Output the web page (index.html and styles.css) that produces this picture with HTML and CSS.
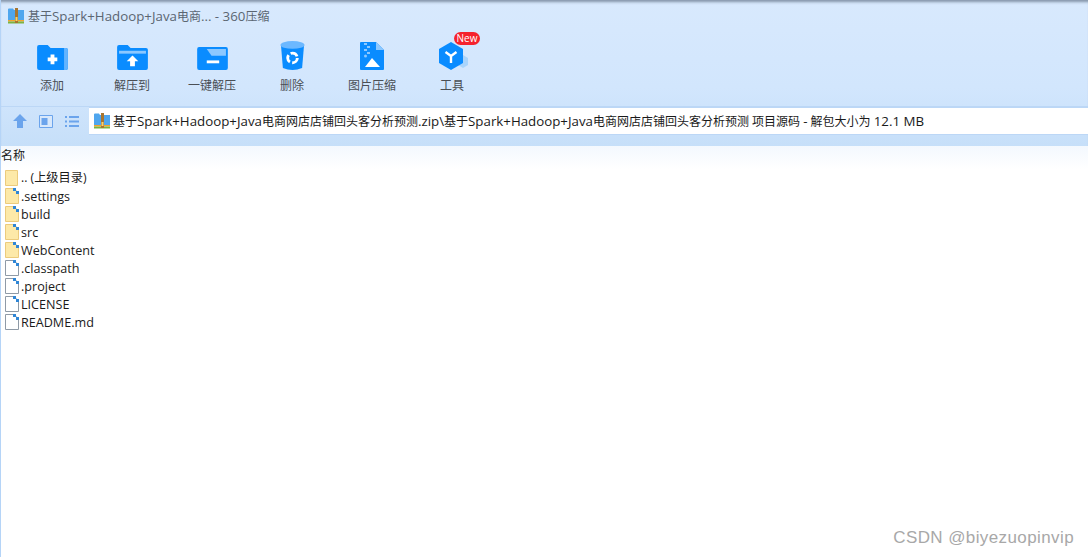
FILE: index.html

```html
<!DOCTYPE html>
<html lang="zh-CN">
<head>
    <meta charset="UTF-8" />
    <title>360压缩</title>
    <link rel="stylesheet" href="styles.css">
</head>
<body>
    <svg class="defs" width="0" height="0">
        <symbol id="zip" viewBox="0 0 16 16">
            <path d="M0 3V1.500Q0 .5 1 .5H5L6 2H16V12H0Z" fill="#4fa6ee"/>
            <path d="M0 12H16V13.500H0Z" fill="#f2a52c"/>
            <path d="M0 13.500H16V15.500H0Z" fill="#7cb342"/>
            <path d="M7 0H10V15H7Z" fill="#a8752f"/>
            <path d="M7.500 9H9.500V13H7.500Z" fill="#f7d26a"/>
        </symbol>
        <symbol id="folder" viewBox="0 0 14 16">
            <path d="M.5 .5H12.500V15.500H.5Z" fill="#fde9a8" stroke="#eccb7c"/>
        </symbol>
        <symbol id="sfolder" viewBox="0 0 14 16">
            <path d="M.5 .5H9L13.500 5V15.500H.5Z" fill="#fde9a8" stroke="#eccb7c"/>
            <rect x="8" y="0" width="3" height="3" fill="#2f86d6"/>
            <rect x="11" y="3" width="3" height="3" fill="#2f86d6"/>
        </symbol>
        <symbol id="file" viewBox="0 0 14 16">
            <path d="M.5 .5H9L13.500 5V15.500H.5Z" fill="#fff" stroke="#8f9aa6"/>
            <rect x="8" y="0" width="3" height="3" fill="#2f86d6"/>
            <rect x="11" y="3" width="3" height="3" fill="#2f86d6"/>
        </symbol>
    </svg>

    <header class="chrome">
        <div class="titlebar">
            <svg class="title-icon"><use href="#zip"/></svg>
            <span>基于<span class="lat">Spark+Hadoop+Java</span>电商<span class="lat">...&nbsp;- 360</span>压缩</span>
        </div>

        <nav class="toolbar">
            <div class="tool">
                <div class="tool-icon">
                    <svg class="ico-folder" viewBox="0 0 32 26">
                        <path d="M0 2Q0 0 2 0H11L14 3H30Q32 3 32 5V24Q32 26 30 26H2Q0 26 0 24Z" fill="#0a8cff"/>
                        <path d="M28 3H30Q32 3 32 5V24Q32 26 30 26H28Z" fill="#63b4ff"/>
                        <path d="M14 10H18V13H21V17H18V20H14V17H11V13H14Z" fill="#fff"/>
                    </svg>
                </div>
                <span>添加</span>
            </div>
            <div class="tool">
                <div class="tool-icon">
                    <svg class="ico-folder" viewBox="0 0 32 26">
                        <path d="M0 2Q0 0 2 0H11L14 3H30Q32 3 32 5V24Q32 26 30 26H2Q0 26 0 24Z" fill="#0a8cff"/>
                        <path d="M2 6H30V9H2Z" fill="#8cc8ff"/>
                        <path d="M16 11L22 17H18.500V22H13.500V17H10Z" fill="#fff"/>
                    </svg>
                </div>
                <span>解压到</span>
            </div>
            <div class="tool">
                <div class="tool-icon">
                    <svg class="ico-open" viewBox="0 0 32 24">
                        <path d="M0 2Q0 0 2 0H30Q32 0 32 2V22Q32 24 30 24H2Q0 24 0 22Z" fill="#0a8cff"/>
                        <path d="M10 2H30V9H15Z" fill="#8cc8ff"/>
                        <path d="M10 14H23V17H10Z" fill="#fff"/>
                    </svg>
                </div>
                <span>一键解压</span>
            </div>
            <div class="tool">
                <div class="tool-icon">
                    <svg class="ico-trash" viewBox="0 0 26 30">
                        <path d="M1 4L3 28Q8 30 13 30T23 28L25 4Z" fill="#0a8cff"/>
                        <ellipse cx="13" cy="4" rx="12.500" ry="4" fill="#6cb8ff"/>
                        <circle cx="13" cy="17.500" r="5" fill="none" stroke="#fff" stroke-width="3" stroke-dasharray="8 2.470"/>
                    </svg>
                </div>
                <span>删除</span>
            </div>
            <div class="tool">
                <div class="tool-icon">
                    <svg class="ico-doc" viewBox="0 0 24 28">
                        <path d="M1 0H16L24 8V27Q24 28 23 28H1Q0 28 0 27V1Q0 0 1 0Z" fill="#0a8cff"/>
                        <path d="M16 0L24 8H16Z" fill="#8cc8ff"/>
                        <path d="M4 1H7V3H4ZM7 4H10V6H7ZM4 7H7V9H4ZM7 10H10V12H7Z" fill="#8cc8ff"/>
                        <circle cx="5.500" cy="14" r="1.500" fill="#8cc8ff"/>
                        <path d="M5 25L12 16L20 25Z" fill="#fff"/>
                    </svg>
                </div>
                <span>图片压缩</span>
            </div>
            <div class="tool">
                <div class="tool-icon">
                    <svg class="ico-hex" viewBox="0 0 30 28">
                        <path d="M24 13L29 16V23L24 26L19 23V16Z" fill="#a9d4fb"/>
                        <path d="M12 0L24 7V21L12 28L0 21V7Z" fill="#0a8cff"/>
                        <path d="M12 14V21M12 14L6.500 10M12 14L17.500 10" stroke="#fff" stroke-width="2.400" fill="none"/>
                    </svg>
                </div>
                <span>工具</span>
                <b class="badge">New</b>
            </div>
        </nav>

        <div class="pathbar">
            <div class="nav-icons">
                <svg viewBox="0 0 14 14" width="14" height="14"><path d="M7 0L14 7H10V14H4V7H0Z" fill="#6ba4ec"/></svg>
                <svg viewBox="0 0 14 13" width="14" height="13">
                    <path d="M.5 .5H13.500V12.500H.5Z" fill="#d8e8fb" stroke="#6ba4ec"/>
                    <path d="M2.500 3H8.500V10H2.500Z" fill="#6ba4ec"/>
                </svg>
                <svg viewBox="0 0 14 11" width="14" height="11">
                    <path d="M0 0H2V2H0ZM4 0H14V2H4ZM0 4.500H2V6.500H0ZM4 4.500H14V6.500H4ZM0 9H2V11H0ZM4 9H14V11H4Z" fill="#6ba4ec"/>
                </svg>
            </div>
            <div class="path">
                <svg class="title-icon"><use href="#zip"/></svg>
                <span>基于<span class="lat">Spark+Hadoop+Java</span>电商网店店铺回头客分析预测<span class="lat">.zip\</span>基于<span class="lat">Spark+Hadoop+Java</span>电商网店店铺回头客分析预测 项目源码 <span class="lat">-</span> 解包大小为 <span class="lat">12.1 MB</span></span>
            </div>
        </div>
    </header>

    <main class="list">
        <div class="col-head">名称</div>
        <ul class="files">
            <li><svg><use href="#folder"/></svg><span class="parent">.. (上级目录)</span></li>
            <li><svg><use href="#sfolder"/></svg>.settings</li>
            <li><svg><use href="#sfolder"/></svg>build</li>
            <li><svg><use href="#sfolder"/></svg>src</li>
            <li><svg><use href="#sfolder"/></svg>WebContent</li>
            <li><svg><use href="#file"/></svg>.classpath</li>
            <li><svg><use href="#file"/></svg>.project</li>
            <li><svg><use href="#file"/></svg>LICENSE</li>
            <li><svg><use href="#file"/></svg>README.md</li>
        </ul>
    </main>

    <div class="watermark">CSDN @biyezuopinvip</div>
</body>
</html>
```

FILE: styles.css

```css
* {
    box-sizing: border-box;
}

html, body {
    margin: 0;
    height: 100%;
}

body {
    position: relative;
    overflow: hidden;
    display: flex;
    flex-direction: column;
    font-family: "Open Sans", "Noto Sans CJK SC", sans-serif;
    font-size: 12px;
    color: #1a1a1a;
    background: #fff;
    border-left: 1px solid #b5d4f7;
}

.defs {
    position: absolute;
}

.lat {
    font-size: 13.3px;
}

.chrome {
    height: 146px;
    background: linear-gradient(#d8e9fd, #d2e6fd 60%, #c6dff9);
    box-shadow: inset 0 4px 3px -2px #8494a8;
}

.titlebar {
    height: 32px;
    display: flex;
    align-items: center;
    gap: 4px;
    padding-left: 7px;
    color: #5b6672;
}

.title-icon {
    width: 16px;
    height: 16px;
}

.toolbar {
    height: 75px;
    display: flex;
    padding-left: 11px;
    border-bottom: 1px solid #bcd7f6;
}

.tool {
    position: relative;
    width: 80px;
    display: flex;
    flex-direction: column;
    align-items: center;
    color: #4a4f55;
}

.tool-icon {
    height: 30px;
    margin-top: 8px;
    margin-bottom: 6px;
    display: flex;
    align-items: flex-end;
}

.ico-folder {
    width: 31px;
    height: 25px;
}

.ico-open {
    width: 31px;
    height: 23px;
}

.ico-trash {
    width: 25px;
    height: 29px;
}

.ico-doc {
    width: 24px;
    height: 28px;
}

.ico-hex {
    width: 30px;
    height: 28px;
    margin-left: 3px;
}

.badge {
    position: absolute;
    top: 0;
    left: 42px;
    width: 26px;
    height: 13px;
    border-radius: 7px;
    background: #f5222d;
    color: #fff;
    font-size: 10px;
    font-weight: 400;
    line-height: 13px;
    text-align: center;
}

.pathbar {
    height: 28px;
    display: flex;
    align-items: center;
}

.nav-icons {
    width: 88px;
    display: flex;
    align-items: center;
    gap: 12px;
    padding-left: 12px;
}

.path {
    flex: 1;
    height: 28px;
    display: flex;
    align-items: center;
    gap: 3px;
    padding-left: 5px;
    background: #fff;
    border-top: 1px solid #bcd7f6;
    border-bottom: 1px solid #bcd7f6;
    white-space: nowrap;
}

.list {
    flex: 1;
}

.col-head {
    height: 23px;
    line-height: 20px;
    background: linear-gradient(#f3f8fe, #fff);
}

.files {
    list-style: none;
    margin: 0;
    padding: 0 0 0 4px;
    font-size: 12.6px;
}

.files li {
    height: 18px;
    display: flex;
    align-items: center;
    gap: 2px;
    white-space: nowrap;
}

.files svg {
    width: 14px;
    height: 16px;
    flex: none;
}

.parent {
    font-size: 12.2px;
    line-height: 16px;
}

.watermark {
    position: absolute;
    right: 14px;
    bottom: 9px;
    font-family: "Liberation Sans", sans-serif;
    font-size: 17px;
    color: #a8a8a8;
    letter-spacing: .4px;
}
```
